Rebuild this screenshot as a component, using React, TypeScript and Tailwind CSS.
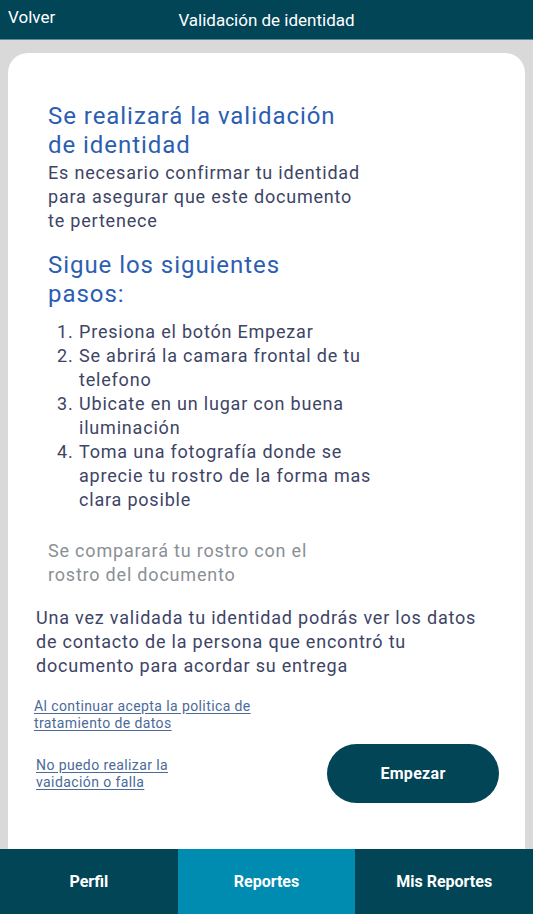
import React from "react"

const steps = [
  "Presiona el botón Empezar",
  "Se abrirá la camara frontal de tu telefono",
  "Ubicate en un lugar con buena iluminación",
  "Toma una fotografía donde se aprecie tu rostro de la forma mas clara posible",
]

const tabs = [
  { label: "Perfil", active: false },
  { label: "Reportes", active: true },
  { label: "Mis Reportes", active: false },
]

export default function App() {
  return (
    <div
      className="flex h-[914px] w-full flex-col overflow-hidden bg-[#d9d9d9]"
      style={{ fontFamily: "Roboto, 'Noto Sans', sans-serif" }}
    >
      {/* Header */}
      <header className="relative flex h-[40px] shrink-0 items-center border-b border-[#5d8d99] bg-[#014557] text-white">
        <button type="button" className="absolute left-[8px] top-[5px] text-[17px]">
          Volver
        </button>
        <h1 className="w-full text-center text-[17px] font-normal leading-[36px]">
          Validación de identidad
        </h1>
      </header>

      {/* Card */}
      <main className="flex flex-1 flex-col px-2 pt-[13px]">
        <div className="flex-1 rounded-t-[20px] bg-white pt-[49px]">
          <div className="pl-[40px]">
            <h2 className="w-[290px] text-[24px] leading-[29px] tracking-[0.95px] text-[#2b5eb2]">
              Se realizará la validación de identidad
            </h2>
            <p className="mt-[1px] w-[322px] text-[18px] leading-[24px] tracking-[0.8px] text-[#3d4465]">
              Es necesario confirmar tu identidad para asegurar que este documento te pertenece
            </p>

            <h2 className="mt-[18px] w-[285px] text-[24px] leading-[29px] tracking-[0.95px] text-[#2b5eb2]">
              Sigue los siguientes pasos:
            </h2>

            <ol className="mt-[11px] pl-[9px] text-[18px] leading-[24px] tracking-[0.8px] text-[#3d4465]">
              {steps.map((s, i) => (
                <li key={s} className="flex">
                  <span className="w-[22px] shrink-0">{i + 1}.</span>
                  <span className="w-[305px]">{s}</span>
                </li>
              ))}
            </ol>

            <p className="mt-[27px] w-[290px] text-[18px] leading-[24px] tracking-[0.8px] text-[#8a9096]">
              Se comparará tu rostro con el rostro del documento
            </p>
          </div>

          <div className="pl-[28px] pr-[26px]">
            <p className="mt-[19px] w-[448px] text-[18px] leading-[24px] tracking-[0.8px] text-[#3d4465]">
              Una vez validada tu identidad podrás ver los datos de contacto de la persona que encontró tu documento para acordar su entrega
            </p>

            <a
              href="#"
              className="-ml-[2px] mt-[20px] block w-[235px] text-[14px] leading-[17px] tracking-[0.4px] text-[#4b6a98] underline underline-offset-2"
            >
              Al continuar acepta la politica de tratamiento de datos
            </a>

            <div className="mt-[12px] flex items-center justify-between">
              <a
                href="#"
                className="block w-[150px] text-[14px] leading-[17px] tracking-[0.4px] text-[#4b6a98] underline underline-offset-2"
              >
                No puedo realizar la vaidación o falla
              </a>
              <button
                type="button"
                className="h-[59px] w-[172px] rounded-full bg-[#014557] text-[16px] font-bold tracking-[0.3px] text-white"
              >
                Empezar
              </button>
            </div>
          </div>
        </div>
      </main>

      {/* Bottom nav */}
      <nav className="grid h-[65px] shrink-0 grid-cols-3 bg-[#014557]">
        {tabs.map((t) => (
          <button
            key={t.label}
            type="button"
            className={`text-[16px] font-bold text-white ${t.active ? "bg-[#008bb0]" : ""}`}
          >
            {t.label}
          </button>
        ))}
      </nav>
    </div>
  )
}
